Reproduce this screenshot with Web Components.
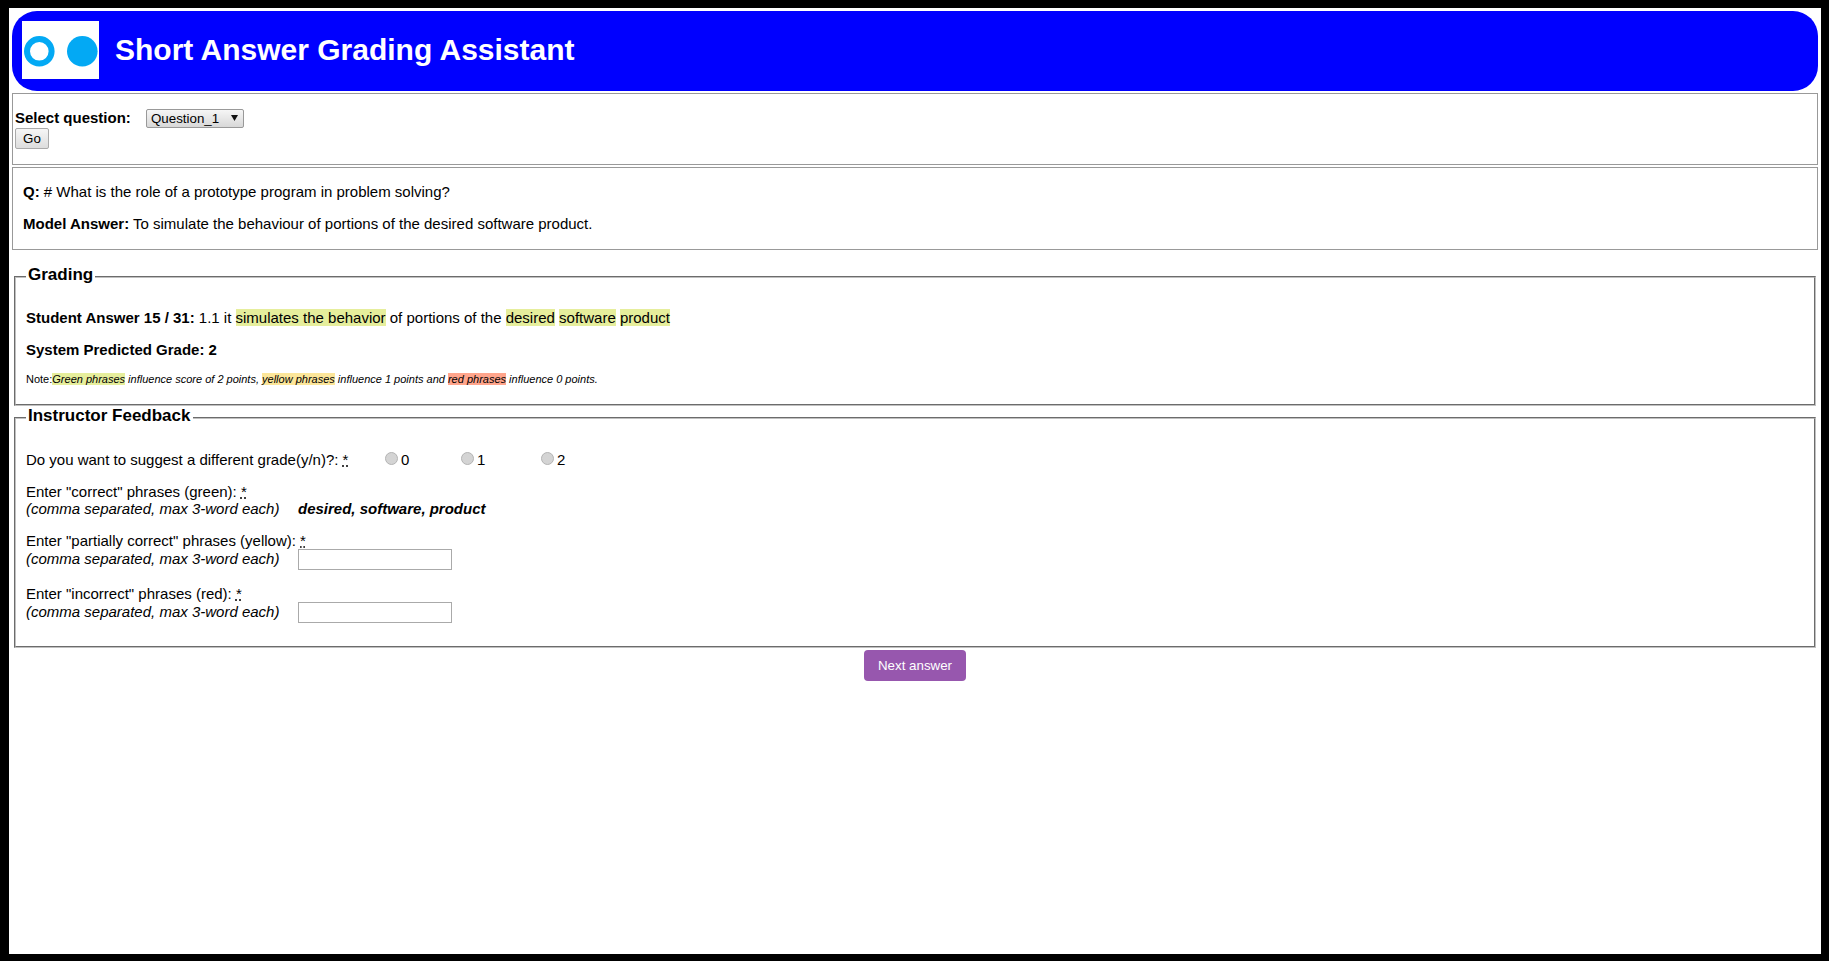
<!DOCTYPE html>
<html lang="en">
<head>
<meta charset="utf-8">
<title>Short Answer Grading Assistant</title>
<style>
	html { background: #000; }
	body { margin: 8px 8px 7px 9px; background: #fff; height: 946px; font-family: "Liberation Sans", Arial, sans-serif; font-size: 15px; color: #000; }
</style>
</head>
<body>
<grading-app></grading-app>

<script>
customElements.define("app-header",
	class extends HTMLElement {
		connectedCallback(){
			this.attachShadow({ mode: "open" });
			this.shadowRoot.innerHTML = `
				<style>
					:host { display: flex; align-items: center; height: 78px; margin: 0 3px 0 3px; padding: 0 0 2px 10px; background: #00f; border-radius: 25px; }
					#logo { display: block; width: 77px; height: 58px; background: #fff; }
					h1 { margin: 0 0 0 16px; font-size: 30px; font-weight: bold; color: #fff; }
				</style>
				<svg id="logo" viewBox="0 0 77 58">
					<circle cx="17.3" cy="30.3" r="12.3" fill="none" stroke="#03a9f4" stroke-width="6"/>
					<circle cx="60.3" cy="30.3" r="15.3" fill="#03a9f4"/>
				</svg>
				<h1><slot></slot></h1>
			`;
		}
	}
);

customElements.define("app-panel",
	class extends HTMLElement {
		connectedCallback(){
			this.attachShadow({ mode: "open" });
			this.shadowRoot.innerHTML = `
				<style>
					:host { display: block; margin: 2px 3px 0 3px; border: 1px solid #999; }
				</style>
				<slot></slot>
			`;
		}
	}
);

customElements.define("question-picker",
	class extends HTMLElement {
		connectedCallback(){
			this.attachShadow({ mode: "open" });
			this.shadowRoot.innerHTML = `
				<style>
					:host { display: block; height: 70px; padding-left: 2px; }
					#row { display: flex; align-items: center; height: 19px; padding-top: 15px; }
					label { font-weight: bold; width: 131px; padding-bottom: 2px; }
					#select { position: relative; display: block; width: 98px; height: 19px; }
					select { appearance: none; display: block; width: 100%; height: 100%; margin: 0; padding: 0 0 0 4px; font: 13.33px "Liberation Sans", Arial, sans-serif; color: #000; border: 1px solid #999; border-radius: 2px; background: linear-gradient(#f6f6f6, #d8d8d8); }
					#arrow { position: absolute; right: 6px; top: 6px; width: 7px; height: 6px; }
					button { display: block; width: 34px; height: 21px; padding: 0; font: 13.33px "Liberation Sans", Arial, sans-serif; color: #000; border: 1px solid #aaa; border-radius: 2px; background: linear-gradient(#f6f6f6, #ddd); }
				</style>
				<div id="row">
					<label for="q">Select question:</label>
					<span id="select">
						<select id="q"><option>Question_1</option></select>
						<svg id="arrow" viewBox="0 0 7 6"><path d="M0 0h7L3.5 6z" fill="#111"/></svg>
					</span>
				</div>
				<button>Go</button>
			`;
		}
	}
);

customElements.define("question-card",
	class extends HTMLElement {
		connectedCallback(){
			this.attachShadow({ mode: "open" });
			this.shadowRoot.innerHTML = `
				<style>
					:host { display: block; height: 81px; padding-left: 10px; }
					p { margin: 0; padding-top: 14px; line-height: 18px; }
					p:first-of-type { padding-top: 15px; }
				</style>
				<p><b>Q:</b> # What is the role of a prototype program in problem solving?</p>
				<p><b>Model Answer:</b> To simulate the behaviour of portions of the desired software product.</p>
			`;
		}
	}
);

customElements.define("app-fieldset",
	class extends HTMLElement {
		connectedCallback(){
			this.attachShadow({ mode: "open" });
			this.shadowRoot.innerHTML = `
				<style>
					:host { display: block; margin: 0 5px; }
					fieldset { margin: 0; padding: 0 10px; border: 2px groove #c0c0c0; min-width: 0; }
					legend { padding: 0 2px 3px; font-size: 17px; font-weight: bold; line-height: 20px; }
				</style>
				<fieldset>
					<legend>${this.getAttribute("legend")}</legend>
					<slot></slot>
				</fieldset>
			`;
		}
	}
);

// no whitespace in this template, the host background would paint it
customElements.define("phrase-mark",
	class extends HTMLElement {
		connectedCallback(){
			this.attachShadow({ mode: "open" });
			const colors = { green: "#e6ee9c", yellow: "#fce69a", red: "#ffa58c" };
			this.shadowRoot.innerHTML = `<style>:host { display: inline; background: ${colors[this.getAttribute("tone")]}; }</style><slot></slot>`;
		}
	}
);

customElements.define("grading-summary",
	class extends HTMLElement {
		connectedCallback(){
			this.attachShadow({ mode: "open" });
			this.shadowRoot.innerHTML = `
				<style>
					:host { display: block; height: 116px; }
					p { margin: 0; line-height: 18px; }
					#answer { padding-top: 21px; }
					#grade { padding-top: 14px; font-weight: bold; }
					#note { padding-top: 13px; font-size: 11px; line-height: 14px; }
				</style>
				<p id="answer"><b>Student Answer 15 / 31:</b> 1.1 it <phrase-mark tone="green">simulates the behavior</phrase-mark> of portions of the <phrase-mark tone="green">desired</phrase-mark> <phrase-mark tone="green">software</phrase-mark> <phrase-mark tone="green">product</phrase-mark></p>
				<p id="grade">System Predicted Grade: 2</p>
				<p id="note">Note:<i><phrase-mark tone="green">Green phrases</phrase-mark> influence score of 2 points, <phrase-mark tone="yellow">yellow phrases</phrase-mark> influence 1 points and <phrase-mark tone="red">red phrases</phrase-mark> influence 0 points.</i></p>
			`;
		}
	}
);

customElements.define("feedback-form",
	class extends HTMLElement {
		connectedCallback(){
			this.attachShadow({ mode: "open" });
			this.shadowRoot.innerHTML = `
				<style>
					:host { display: block; height: 217px; }
					abbr { text-decoration: underline dotted; }
					#grade { display: flex; align-items: center; height: 18px; padding-top: 21px; }
					#grade > span { width: 359px; }
					label { display: flex; align-items: center; width: 76px; }
					label + label { width: 80px; }
					label + label + label { width: auto; }
					input[type=radio] { appearance: none; width: 13px; height: 13px; margin: 0 3px 2px 0; border: 1px solid #b4b4b4; border-radius: 50%; background: #d4d4d4; }
					.phrases { display: grid; grid-template-columns: 272px auto; align-items: center; justify-content: start; line-height: 17px; }
					.phrases div { grid-column: 1 / 3; }
					.phrases i { white-space: nowrap; }
					.phrases b { font-style: italic; }
					input[type=text] { box-sizing: border-box; display: block; width: 154px; height: 21px; margin: 0; padding: 0; border: 1px solid #aaa; background: #fff; }
					#correct { margin-top: 15px; }
					#partial, #wrong { margin-top: 15px; }
					#partial i, #wrong i { margin-bottom: 2px; }
				</style>
				<div id="grade">
					<span>Do you want to suggest a different grade(y/n)?: <abbr title="required">*</abbr></span>
					<label><input type="radio" name="g">0</label>
					<label><input type="radio" name="g">1</label>
					<label><input type="radio" name="g">2</label>
				</div>
				<div class="phrases" id="correct">
					<div>Enter "correct" phrases (green): <abbr title="required">*</abbr></div>
					<i>(comma separated, max 3-word each)</i>
					<b>desired, software, product</b>
				</div>
				<div class="phrases" id="partial">
					<div>Enter "partially correct" phrases (yellow): <abbr title="required">*</abbr></div>
					<i>(comma separated, max 3-word each)</i>
					<input type="text">
				</div>
				<div class="phrases" id="wrong">
					<div>Enter "incorrect" phrases (red): <abbr title="required">*</abbr></div>
					<i>(comma separated, max 3-word each)</i>
					<input type="text">
				</div>
			`;
		}
	}
);

customElements.define("next-button",
	class extends HTMLElement {
		connectedCallback(){
			this.attachShadow({ mode: "open" });
			this.shadowRoot.innerHTML = `
				<style>
					:host { display: flex; justify-content: center; margin-top: 2px; }
					button { width: 102px; height: 31px; padding: 0; font: 13.33px "Liberation Sans", Arial, sans-serif; color: #fff; background: #9757ae; border: 0; border-radius: 4px; }
				</style>
				<button><slot></slot></button>
			`;
		}
	}
);

customElements.define("grading-app",
	class extends HTMLElement {
		connectedCallback(){
			this.attachShadow({ mode: "open" });
			this.shadowRoot.innerHTML = `
				<style>
					:host { display: block; padding-top: 3px; }
					#grading { margin-top: 15px; }
				</style>
				<app-header>Short Answer Grading Assistant</app-header>
				<app-panel><question-picker></question-picker></app-panel>
				<app-panel><question-card></question-card></app-panel>
				<app-fieldset id="grading" legend="Grading"><grading-summary></grading-summary></app-fieldset>
				<app-fieldset id="feedback" legend="Instructor Feedback"><feedback-form></feedback-form></app-fieldset>
				<next-button>Next answer</next-button>
			`;
		}
	}
);
</script>
</body>
</html>
